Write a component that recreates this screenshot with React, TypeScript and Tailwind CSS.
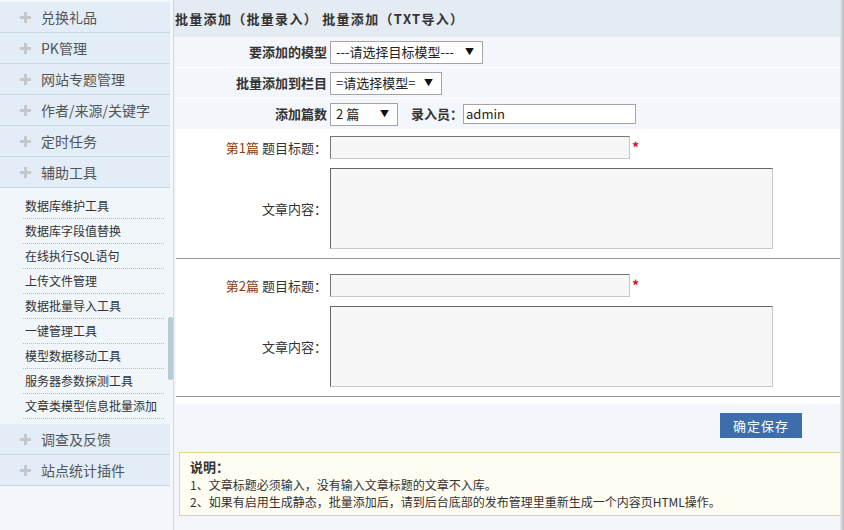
import React from "react";

const font = { fontFamily: '"Noto Sans CJK SC", "Liberation Sans", sans-serif' };

const topMenus = ["兑换礼品", "PK管理", "网站专题管理", "作者/来源/关键字", "定时任务", "辅助工具"];
const subItems = [
  "数据库维护工具",
  "数据库字段值替换",
  "在线执行SQL语句",
  "上传文件管理",
  "数据批量导入工具",
  "一键管理工具",
  "模型数据移动工具",
  "服务器参数探测工具",
  "文章类模型信息批量添加",
];
const bottomMenus = ["调查及反馈", "站点统计插件"];

function Plus() {
  return (
    <span className="relative inline-block w-[11px] h-[11px] mr-[10px]">
      <span className="absolute left-0 top-[4px] w-[11px] h-[3px] bg-[#c4c8cc]" />
      <span className="absolute left-[4px] top-0 w-[3px] h-[11px] bg-[#c4c8cc]" />
    </span>
  );
}

function MenuHead({ label }: { label: string }) {
  return (
    <div className="h-[31px] flex items-center pl-[20px] bg-[#e2edf8] border-b border-[#c6d6e6] text-[14px] text-[#555]">
      <Plus />
      {label}
    </div>
  );
}

function Select({ text, width }: { text: string; width: number }) {
  return (
    <div
      className="h-[23px] bg-white border border-[#a5a5a5] flex items-center justify-between pl-[5px] pr-[8px] text-[13px] text-[#222]"
      style={{ width }}
    >
      <span>{text}</span>
      <span className="text-[9px] text-[#111]">▼</span>
    </div>
  );
}

function FormRow({ label, children }: { label: string; children: React.ReactNode }) {
  return (
    <div className="h-[31px] flex items-center bg-[#f3f7fc] border-b border-white">
      <div className="w-[154px] text-right pr-[3px] text-[13px] font-bold text-[#333]">{label}</div>
      <div className="flex items-center">{children}</div>
    </div>
  );
}

function Article({ n, top }: { n: number; top: number }) {
  return (
    <div className="bg-white" style={{ paddingTop: top }}>
      <div className="flex items-center">
        <div className="w-[154px] text-right pr-[3px] text-[13px] text-[#333]">
          <span className="text-[#8f3d0c]">第{n}篇</span> 题目标题：
        </div>
        <div className="w-[300px] h-[23px] bg-[#f7f7f7] border border-[#c8c8c8] border-t-[#777] border-l-[#777]" />
        <span className="text-[#d0102f] text-[14px] font-bold ml-[2px]">*</span>
      </div>
      <div className="flex items-center mt-[9px]">
        <div className="w-[154px] text-right pr-[3px] text-[13px] text-[#333]">文章内容：</div>
        <div className="w-[443px] h-[81px] bg-[#f7f7f7] border border-[#c8c8c8] border-t-[#666] border-l-[#666]" />
      </div>
      <div className="mt-[9px] h-[2px] border-t border-[#999] bg-white" />
    </div>
  );
}

export default function App() {
  return (
    <div className="w-[844px] h-[530px] flex overflow-hidden bg-[#f3f7fc]" style={font}>
      {/* Sidebar */}
      <div className="relative w-[174px] h-full bg-[#f4f8fc] border-r border-[#cbd9e5] flex flex-col">
        <div className="w-[170px] pt-[2px]">
          {topMenus.map((m) => (
            <MenuHead key={m} label={m} />
          ))}
          <div className="pt-[6px] pb-[5px] bg-[#f1f6fb]">
            {subItems.map((s) => (
              <div
                key={s}
                className="h-[25px] ml-[23px] mr-[6px] pl-[2px] flex items-center border-b border-dotted border-[#b9b9b9] text-[12px] text-[#333]"
              >
                {s}
              </div>
            ))}
          </div>
          {bottomMenus.map((m) => (
            <MenuHead key={m} label={m} />
          ))}
        </div>
        <div className="absolute left-[168px] top-[317px] w-[5px] h-[63px] rounded-[2px] bg-[#b8ccd7]" />
      </div>

      {/* Main */}
      <div className="flex-1 flex">
        <div className="flex-1 flex flex-col">
          <div className="h-[37px] bg-[#e5ebf2] flex items-center pl-[1px] text-[13px] font-bold text-[#333] tracking-[1.3px]">
            批量添加（批量录入） 批量添加（TXT导入）
          </div>
          <div className="ml-[2px]">
            <FormRow label="要添加的模型">
              <Select text="---请选择目标模型---" width={153} />
            </FormRow>
            <FormRow label="批量添加到栏目">
              <Select text="=请选择模型=" width={112} />
            </FormRow>
            <FormRow label="添加篇数">
              <Select text="2 篇" width={68} />
              <span className="ml-[13px] text-[13px] font-bold text-[#333]">录入员：</span>
              <div className="w-[173px] h-[20px] bg-white border border-[#a5a5a5] flex items-center pl-[2px] text-[13px] text-[#222]">
                admin
              </div>
            </FormRow>
            <Article n={1} top={6} />
            <Article n={2} top={14} />
            <div className="h-[6px] bg-white" />
            <div className="h-[48px] bg-[#f3f7fc] flex items-start justify-end pr-[38px] pt-[9px]">
              <div className="w-[82px] h-[25px] bg-[#3d6dab] text-white text-[13px] tracking-[1px] flex items-center justify-center">
                确定保存
              </div>
            </div>
            <div className="ml-[3px] h-[64px] bg-[#fffdf1] border border-r-0 border-[#e8d48e] pl-[10px] pt-[5px] text-[12px] leading-[17px] text-[#333]">
              <div className="font-bold text-[13px] leading-[18px]">说明：</div>
              <div>1、文章标题必须输入，没有输入文章标题的文章不入库。</div>
              <div>2、如果有启用生成静态，批量添加后，请到后台底部的发布管理里重新生成一个内容页HTML操作。</div>
            </div>
          </div>
        </div>
        <div className="w-[4px] bg-gradient-to-r from-[#e4e8ec] to-[#b8bcc0]" />
      </div>
    </div>
  );
}
